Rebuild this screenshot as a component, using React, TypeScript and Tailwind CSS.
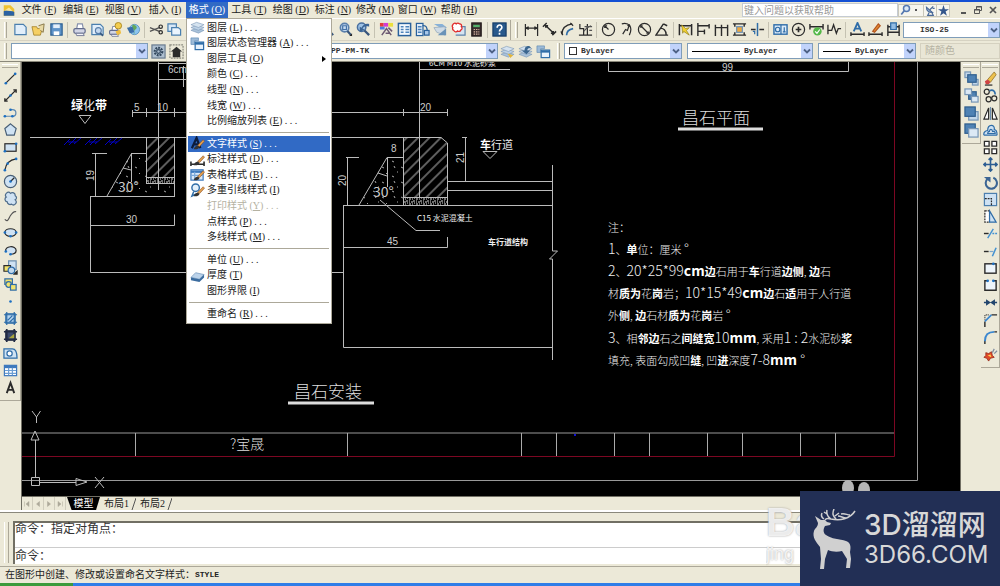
import type { ReactNode } from "react";

type Tool = { name: string; icon: ReactNode };

const INK = "#2b2b2b";
const BLUE = "#2f6da8";
const PALE = "#cfe2f3";

function Glyph({ children }: { children: ReactNode }) {
    return (
        <svg viewBox="0 0 16 16" className="w-[15px] h-[15px] shrink-0" fill="none" stroke={INK} strokeWidth="1.3">
            {children}
        </svg>
    );
}

const dot = (x: number, y: number) => <circle cx={x} cy={y} r="1.4" fill="#1b6fc2" stroke="none" />;
const brush = (
    <>
        <path d="M8 10l6-6 1.500 1.500-5.500 6z" fill="#e0a050" stroke="#8a4a20" strokeWidth=".6" />
        <path d="M4 14c1-3 3-4 5-3.500L10 12c-1 2-3 2.500-6 2z" fill="#333" stroke="none" />
    </>
);
const layers = (
    <>
        <path d="M1 11l6-2.500 8 2.500-6 3z" fill="#a9c2da" stroke="#7593b3" strokeWidth=".6" />
        <path d="M1 8l6-2.500L15 8l-6 3z" fill="#bcd1e6" stroke="#7593b3" strokeWidth=".6" />
        <path d="M1 5l6-2.500L15 5 9 8z" fill="#d5e3f0" stroke="#7593b3" strokeWidth=".6" />
    </>
);
const layerState = (
    <>
        <path d="M1 2h8v3H5v4H1z" fill="#9dbbd8" stroke="#5f89b3" strokeWidth=".7" />
        <rect x="5.500" y="6.500" width="9" height="8" fill="#e8f2fc" stroke={BLUE} />
        <path d="M5.500 8h9" stroke={BLUE} strokeWidth="2.400" />
    </>
);
const page = <path d="M2 2.500h9l3 3v8H2z" fill="#e1eefa" stroke="#4a7fae" />;
const printer = (
    <>
        <path d="M5 7l1-5h5l1 5" fill="#fff" stroke="#8791ad" />
        <rect x="2" y="7" width="12" height="5" rx="1.500" fill="#d3d6e6" stroke="#626b8c" />
        <path d="M4 12h8l1 2.500H5z" fill="#f3f3f8" stroke="#626b8c" strokeWidth=".9" />
    </>
);
const lens = (
    <>
        <circle cx="7" cy="6" r="4.500" fill="#c5daf0" stroke="#5a7fab" strokeWidth="1.700" />
        <path d="M10 9.500l4 4.500" stroke="#39567c" strokeWidth="2.400" />
    </>
);
const blob = (
    <path
        d="M3.500 6.500A3 3 0 0 1 8 2.500a3 3 0 0 1 5 2.500 2.500 2.500 0 0 1 0 4.500A3 3 0 0 1 9 14a3 3 0 0 1-4.500-2.500 2.700 2.700 0 0 1-1-5z"
        fill={PALE}
        stroke="#4f6d8c"
    />
);

const standardTools: Tool[][] = [
    [
        { name: "新建", icon: page },
        {
            name: "打开",
            icon: (
                <>
                    <path d="M1 5h5l1 2h5l-2 7H3z" fill="#f5cf63" stroke="#9c7a20" strokeWidth=".8" />
                    <path d="M8 4l6-2-1 9-3-2" fill="#e8d9a5" stroke="#7b6b3a" strokeWidth=".9" />
                </>
            ),
        },
        {
            name: "保存",
            icon: (
                <>
                    <rect x="2" y="2" width="12" height="12" fill="#5e93c8" stroke="#2c5f93" />
                    <path d="M4.500 2.500h7v4h-7z" fill="#e4effa" stroke="none" />
                    <path d="M5 10h6v4H5z" fill="#fff" stroke="none" />
                </>
            ),
        },
    ],
    [
        { name: "打印", icon: printer },
        { name: "打印预览", icon: <>{page}<g transform="translate(4 5) scale(.7)">{lens}</g></> },
        {
            name: "发布",
            icon: (
                <>
                    <g transform="translate(0 3) scale(.85)">{printer}</g>
                    <circle cx="11" cy="4" r="3.500" fill="#f4cd4d" stroke="#a4801c" strokeWidth=".9" />
                    <path d="M8 10l5-2 1 4-4 2z" fill="#f0bd3d" stroke="none" />
                </>
            ),
        },
        {
            name: "三维DWF",
            icon: (
                <>
                    <circle cx="9" cy="8" r="5.500" fill="#8cc5ee" stroke="#4d8abb" strokeWidth=".8" />
                    <path d="M7 3c4 0 6 3 3 5s1 4-2 5c3-4-3-6-1-10z" fill="#63a95b" stroke="none" />
                    <path d="M1 6l6-1 2 6-5 1z" fill="#3b6ea8" stroke="none" />
                </>
            ),
        },
    ],
    [
        {
            name: "剪切",
            icon: (
                <>
                    <path d="M1 6l10 4M1 10l10-4" stroke="#555" strokeWidth="1.400" />
                    <circle cx="12.500" cy="5" r="1.800" />
                    <circle cx="12.500" cy="11" r="1.800" />
                </>
            ),
        },
        {
            name: "复制",
            icon: (
                <>
                    <path d="M1 2h9v8H1z" fill="#d7e8f7" stroke="#4a7fae" />
                    <path d="M5 6h7l2.500 2v6H5z" fill="#eaf4fd" stroke="#4a7fae" />
                </>
            ),
        },
        { name: "粘贴", icon: <><path d="M2 3h9v11H2z" fill="#d9a54a" stroke="#7b5a1e" /><path d="M6 7h8v8H6z" fill="#fff" stroke="#4a7fae" /></> },
        { name: "特性匹配", icon: brush },
    ],
    [
        { name: "放弃", icon: <path d="M3 7c4-5 10-2 9 6M3 2v5h5" stroke={BLUE} strokeWidth="2" /> },
        { name: "重做", icon: <path d="M13 7C9 2 3 5 4 13M13 2v5H8" stroke={BLUE} strokeWidth="2" /> },
        { name: "平移", icon: <path d="M8 1v14M1 8h14" /> },
        { name: "实时缩放", icon: lens },
        { name: "三维动态观察", icon: <circle cx="8" cy="8" r="6" fill={PALE} /> },
        { name: "缩放", icon: lens },
        { name: "窗口缩放", icon: <>{lens}<path d="M15 12v3h-3z" fill={INK} stroke="none" /><path d="M5 4h4v4H5z" stroke="#4673a8" /></> },
        {
            name: "缩放上一个",
            icon: (
                <>
                    <circle cx="6" cy="5.500" r="4.500" fill="#9dc2e6" stroke="#496f9e" strokeWidth="1.600" />
                    <path d="M9 9l5 5" stroke="#39567c" strokeWidth="2.400" />
                    <path d="M14 2c-4-1-7 1-8 4l-2-1v6l5-3-2-1c1-2 4-3 7-2z" fill="#3c6594" stroke="none" />
                </>
            ),
        },
    ],
    [
        {
            name: "特性",
            icon: (
                <>
                    <path d="M1 1h4v4H1z" fill="#e23b3b" stroke="none" />
                    <path d="M5 1h5v4H5z" fill="#d23bd2" stroke="none" />
                    <path d="M10 1h5v4h-5z" fill="#ebdf3a" stroke="none" />
                    <path d="M1 5h5v3H1z" fill="#4a7de0" stroke="none" />
                    <path d="M3 14l5-7 5 7M10 6l4 4M7 12h5" stroke="#6d5a72" strokeWidth="1.600" />
                </>
            ),
        },
        {
            name: "设计中心",
            icon: (
                <>
                    <rect x="1.500" y="1.500" width="13" height="13" fill="#f3f8fd" stroke="#29619c" strokeWidth="1.600" />
                    <path d="M4 5h3M4 8h3M4 11h3M9 5h4M9 8h4M9 11h4" stroke="#4d83bb" strokeWidth="1.600" />
                </>
            ),
        },
        {
            name: "工具选项板",
            icon: (
                <>
                    <rect x="1.500" y="1.500" width="7" height="13" fill="#e4eef8" stroke="#29619c" />
                    <path d="M3 5h4M3 8h4M3 11h4" stroke="#4d83bb" strokeWidth="1.500" />
                    <path d="M8 4c4-1 5 2 5 6" stroke="#29619c" />
                    <rect x="10" y="9" width="5" height="5" fill="#a9c8e8" stroke="#29619c" />
                </>
            ),
        },
        {
            name: "图纸集",
            icon: (
                <>
                    <path d="M1 2h9l5 4-6 1z" fill="#87b1d8" stroke="none" />
                    <path d="M1 6l12-1v9L4 11z" fill="#cfdbe5" stroke="#93a8bb" strokeWidth=".8" />
                    <path d="M5 14l9-7v7z" fill="#6a93b8" stroke="none" />
                </>
            ),
        },
        {
            name: "标记集",
            icon: (
                <>
                    <path d="M8 5h7v9H5" fill="#d6e4f1" stroke="#5e83a9" />
                    <path
                        d="M2 3a2 2 0 0 1 3.500-1A2.200 2.200 0 0 1 9 2a2 2 0 0 1 2 3 2 2 0 0 1-.500 3.500 2.200 2.200 0 0 1-3.500 1 2.200 2.200 0 0 1-4-.500A2 2 0 0 1 2 6a2 2 0 0 1 0-3z"
                        fill="#fff"
                        stroke="#e02b2b"
                        strokeWidth="1.400"
                    />
                </>
            ),
        },
        {
            name: "计算器",
            icon: (
                <>
                    <rect x="3" y="1" width="10" height="14" fill="#3b2f2f" stroke="#221a1a" />
                    <path d="M4.500 3h7v2.500h-7z" fill="#54b06a" stroke="none" />
                    <path d="M5 8h6M5 10.500h6M5 13h6" stroke="#d9b7a4" strokeDasharray="1.500 1" />
                </>
            ),
        },
    ],
    [
        {
            name: "帮助",
            icon: (
                <>
                    <rect x="1" y="1" width="14" height="14" fill="#28598c" stroke="#173e68" />
                    <path d="M5.500 6c0-4 5.500-3.500 5 0-.3 2-2.500 2-2.500 4M8 11.500v2" stroke="#fff" strokeWidth="1.800" />
                </>
            ),
        },
    ],
];

const dimensionTools: Tool[][] = [
    [
        { name: "线性", icon: <path d="M1.500 2v13M14.500 2v13M2 6.500h12M5 5L2 6.500 5 8M11 5l3 1.500L11 8" /> },
        { name: "对齐", icon: <path d="M1 5l4-4M11 14l4-4M3.500 3.500l9 8.500M4 6V4h2.500M12 9.500V12H9.500" strokeWidth="1.600" /> },
        { name: "弧长", icon: <><path d="M2 13C2 7 6 3 13 2" /><path d="M7 14c0-4 2-6 7-7" stroke={BLUE} strokeWidth="1.800" /><path d="M1 10l2 4M11 1l3 3" /></> },
        { name: "坐标", icon: <><path d="M2 2v5h4v7M1 14h14M10 2v12" /><path d="M6 10l4-4 4-2M7 5h8M12 9h3" stroke="#555" /></> },
    ],
    [
        { name: "半径", icon: <><circle cx="8" cy="8" r="6.500" /><path d="M8 8L4 4M4 6.500V4h2.500" /></> },
        { name: "折弯", icon: <><path d="M3 2c8-2 12 4 8 12" /><path d="M4 13l3-5 2 1 2-6M9 4l2-1 1 2" /></> },
        { name: "直径", icon: <><circle cx="8" cy="8" r="6.500" /><path d="M3.500 3.500l9 9M4 6V4h2M12 10v2h-2" /></> },
        { name: "角度", icon: <path d="M14 14H1L9 2M5 7c4-1 7 2 7 7M9 2l4 2" strokeWidth="1.500" /> },
    ],
    [
        { name: "快速标注", icon: <><path d="M1.500 2v12M14.500 2v12M2 4h12" strokeWidth="1.600" /><path d="M4 3l4 4 4-1-3 3 3 5-6-4-1 2z" fill="#f3d130" stroke="#8b7a1c" strokeWidth=".7" /></> },
        { name: "基线", icon: <path d="M2 1v14M2 4h12M2 10h7M14 2v5M9 8v5" strokeWidth="1.500" /> },
        { name: "连续", icon: <path d="M1.500 3v12M8 3v12M14.500 3v12M2 6h12" strokeWidth="1.500" /> },
        { name: "标注间距", icon: <><path d="M1 2h14M1 14h14M3 2v3M3 14v-3M13 2v3M13 14v-3" strokeWidth="1.500" /><rect x="5" y="5" width="6" height="6" fill="#efa83c" stroke="#6c92b9" /></> },
        { name: "标注打断", icon: <><path d="M1 8h5M10 8h5" strokeWidth="1.500" /><path d="M8 1v14" stroke={BLUE} strokeWidth="1.600" /><path d="M3 10h2v3" stroke={BLUE} /></> },
    ],
    [
        { name: "公差", icon: <><rect x="1" y="3" width="14" height="10" fill="#dcebf8" stroke={BLUE} strokeWidth="1.500" /><circle cx="5" cy="8" r="2.400" stroke={BLUE} /><path d="M8.500 3v10M12 5.500v5M10.500 10.500h3" stroke={BLUE} /></> },
        { name: "圆心标记", icon: <><circle cx="8" cy="8" r="6.500" /><path d="M8 5v6M5 8h6" strokeWidth="1.800" /></> },
        { name: "检验", icon: <><path d="M1 2v6M15 2v6M1 5h14" strokeWidth="1.500" /><circle cx="9" cy="10" r="4.500" fill="#54b848" stroke="none" /><path d="M6.500 10l2 2 3-4" stroke="#fff" /></> },
        { name: "折弯线性", icon: <path d="M1 3v10M1 9h4l2-6 3 9 2-5h3" strokeWidth="1.400" /> },
    ],
    [
        { name: "编辑标注", icon: <><path d="M1 11v4M15 11v4M1 13h14" strokeWidth="1.500" /><path d="M4 10l4-9 4 9M5.500 7h5" stroke={BLUE} strokeWidth="2" /></> },
        { name: "编辑标注文字", icon: <><path d="M1 11v4M15 11v4M1 13h14" strokeWidth="1.500" /><path d="M5 10l6-8 2 2-6 7z" fill="#e58f31" stroke="#b3541e" /></> },
        { name: "标注更新", icon: <><path d="M2 3v12M14 3v12M2 5h12M2 11h12" strokeWidth="1.500" /><path d="M5 1h6v7H5z" fill="#92bce3" stroke={BLUE} /></> },
    ],
];

const layerTools: Tool[] = [
    { name: "图层上置", icon: <>{layers}<path d="M8 10l6 2-3 3z" fill="#e4b638" stroke="none" /></> },
    { name: "上一个图层", icon: <>{layers}<path d="M12 2c-4 0-5 2-5 5H4l5 4 4-4h-3c0-2 1-3 4-3z" fill="#3b668f" stroke="none" /></> },
    { name: "图层状态", icon: layerState },
];

const drawTools: Tool[] = [
    { name: "直线", icon: <><path d="M3 13L13 3" />{dot(3, 13)}{dot(13, 3)}</> },
    { name: "构造线", icon: <><path d="M2 14L14 2M2 11v3h3M11 2h3v3" strokeWidth="1.500" />{dot(8, 8)}</> },
    { name: "多段线", icon: <><path d="M2 12h8c5 0 5-7 0-7H8" stroke="#5c87b0" />{dot(2, 12)}{dot(8, 5)}{dot(10, 12)}</> },
    { name: "正多边形", icon: <path d="M8 2l6 5-2 7H4L2 7z" fill={PALE} stroke="#485f77" /> },
    { name: "矩形", icon: <><rect x="2" y="4" width="12" height="8" fill={PALE} />{dot(2, 12)}{dot(14, 4)}</> },
    { name: "圆弧", icon: <><path d="M2 14C3 7 7 3 14 2" />{dot(2, 14)}{dot(5, 7)}{dot(14, 2)}</> },
    { name: "圆", icon: <><circle cx="8" cy="8" r="6.500" fill={PALE} stroke="#485f77" /><path d="M8 8l4-4" />{dot(8, 8)}</> },
    { name: "修订云线", icon: blob },
    { name: "样条曲线", icon: <path d="M2 12c3 4 4-1 6-4s4-5 6-4" stroke="#555" /> },
    { name: "椭圆", icon: <><ellipse cx="8" cy="8" rx="6" ry="4" fill={PALE} />{dot(2, 8)}{dot(14, 8)}{dot(8, 12)}</> },
    { name: "椭圆弧", icon: <><path d="M3 9C1 3 14 2 14 8c0 3-3 4-6 4" fill={PALE} />{dot(3, 9)}{dot(8, 12)}</> },
    { name: "插入块", icon: <><path d="M6 1h8v9H6z" fill={PALE} stroke="#6d8fb0" /><path d="M1 6h7v6H1z" fill="#f2e36c" /><circle cx="9" cy="11" r="3.500" fill="#c1d8ed" stroke={BLUE} /><path d="M15 12v3h-3z" fill={INK} /></> },
    { name: "创建块", icon: <><path d="M2 2h8v6H2z" fill="#f2e36c" stroke={BLUE} /><circle cx="6" cy="8" r="3" fill="#f2e36c" stroke={BLUE} /><rect x="8" y="8" width="6" height="6" fill="#f2e36c" stroke={BLUE} /></> },
    { name: "点", icon: dot(8, 8) },
    { name: "图案填充", icon: <><rect x="3" y="3" width="10" height="10" fill="#b8d6f0" stroke={BLUE} /><path d="M1 4h14M1 12h14M4 1v14M12 1v14M5 10l5-5M7 12l5-5" stroke={BLUE} /></> },
    { name: "渐变色", icon: <><rect x="3" y="3" width="10" height="10" fill="#3c4a6c" stroke="#222b44" /><path d="M1 4h14M1 12h14M4 1v14M12 1v14" stroke="#222b44" strokeWidth="1.800" /><path d="M6 11l6-5v5z" fill="#a9a43c" stroke="none" /></> },
    { name: "面域", icon: <><path d="M1 3h9c3 0 5 3 5 10H1z" fill={PALE} stroke={BLUE} /><circle cx="7" cy="8" r="2.800" fill="#fff" stroke={BLUE} /></> },
    { name: "表格", icon: <><rect x="1.500" y="2.500" width="13" height="11" fill="#fff" stroke="#3d79bd" /><path d="M2 4h12" stroke="#3d79bd" strokeWidth="3" /><path d="M2 8h12M2 11h12M6 5v8M10 5v8" stroke="#6d9fd4" /></> },
    { name: "多行文字", icon: <path d="M4 14L8 3l4 11M5 10.500h6" strokeWidth="2" /> },
];

const orderTools: Tool[] = [
    { name: "前置", icon: <><rect x="1" y="1" width="6" height="6" fill="#c3d7ea" stroke="#7796b6" /><rect x="9" y="9" width="6" height="6" fill="#c3d7ea" stroke="#7796b6" /><rect x="4" y="4" width="9" height="8" fill="#4f82b4" stroke="#315f8e" /></> },
    { name: "后置", icon: <><rect x="5" y="4" width="8" height="8" fill="#4f82b4" stroke="#315f8e" /><rect x="1" y="1" width="7" height="6" fill="#dce9f5" stroke="#7796b6" /><rect x="8" y="9" width="7" height="6" fill="#dce9f5" stroke="#7796b6" /></> },
    { name: "置于对象之上", icon: <><rect x="5" y="6" width="10" height="9" fill="#c3d7ea" stroke="#7796b6" /><rect x="1" y="1" width="11" height="10" fill="#4f82b4" stroke="#315f8e" /></> },
    { name: "置于对象之下", icon: <><rect x="1" y="1" width="11" height="10" fill="#4f82b4" stroke="#315f8e" /><rect x="5" y="6" width="10" height="9" fill="#dce9f5" stroke="#7796b6" /></> },
];

const modifyTools: Tool[] = [
    { name: "删除", icon: <><path d="M5 9l7-8 2 3-6 8z" fill="#edc14d" stroke="#8e6d21" strokeWidth=".8" /><path d="M2 11l3-2 3 3-2 2H3z" fill="#cf4343" stroke="none" /><path d="M2 15h8" /></> },
    { name: "复制对象", icon: <><circle cx="4" cy="4" r="2.700" /><circle cx="6" cy="12" r="2.700" /><circle cx="12" cy="11" r="2.700" /><path d="M7 3c4-2 6 1 6 4" stroke={BLUE} strokeWidth="1.800" /></> },
    { name: "镜像", icon: <><path d="M6 2v12H1zM10 2v12h5z" fill="#fff" /><path d="M8 1v14" stroke="#6b8bab" /></> },
    { name: "偏移", icon: <><path d="M1 13h14M1 13c-1-4 3-5 4-5 0-7 8-7 7-1 3 0 3 3 3 6" stroke={BLUE} fill={PALE} /><path d="M5 11h8c0-3-2-2-3-2 0-3-3-3-3 0-1 0-2 0-2 2z" fill="#fff" stroke={BLUE} /></> },
    { name: "阵列", icon: <path d="M1.500 1.500h5v5h-5zM9.500 1.500h5v5h-5zM1.500 9.500h5v5h-5zM9.500 9.500h5v5h-5z" fill="#fff" strokeWidth="1.400" /> },
    { name: "移动", icon: <path d="M8 1v14M1 8h14M6 3l2-2 2 2M6 13l2 2 2-2M3 6L1 8l2 2M13 6l2 2-2 2" stroke="#2d5d92" strokeWidth="1.700" /> },
    { name: "旋转", icon: <><path d="M5 4a6 6 0 1 0 6-1" stroke="#3c6594" strokeWidth="2.200" /><path d="M1 2h7v6z" fill="#3c6594" stroke="none" /></> },
    { name: "缩放对象", icon: <><rect x="1.500" y="1.500" width="13" height="13" fill={PALE} stroke="#4c7fae" /><path d="M2 7h7v7" stroke={INK} strokeDasharray="2 1" /></> },
    { name: "拉伸", icon: <><path d="M2 2h5v12H2z" fill="#fff" strokeDasharray="2 1" /><path d="M7 2l7 12H7z" fill={PALE} stroke={BLUE} /></> },
    { name: "修剪", icon: <><path d="M1 8h5" strokeWidth="1.500" /><path d="M5 13l6-10" stroke="#4391d1" strokeWidth="1.500" /><path d="M10 8h5" stroke="#4391d1" strokeWidth="1.500" strokeDasharray="2 1" /></> },
    { name: "延伸", icon: <><path d="M1 8h5" strokeWidth="1.500" /><path d="M7 8h4" stroke="#7da6cc" /><path d="M10 13l4-9" stroke="#4391d1" strokeWidth="1.600" /></> },
    { name: "打断于点", icon: <><rect x="2" y="3" width="12" height="10" fill="#eef5fb" strokeWidth="1.500" />{dot(11, 3)}</> },
    { name: "打断", icon: <><path d="M5 3H2v10h12V3h-3" fill="#eef5fb" strokeWidth="1.500" />{dot(5, 3)}{dot(11, 3)}</> },
    { name: "合并", icon: <path d="M1 8h4M15 8h-4M4 6l3 2-3 2zM12 6L9 8l3 2z" fill="#23466e" stroke="#23466e" strokeWidth="1.500" /> },
    { name: "倒角", icon: <><path d="M2 15V9M9 2h6" strokeWidth="1.500" /><path d="M2 9l7-7" stroke="#3b87cf" strokeWidth="1.800" /><path d="M2 7V2h5" strokeDasharray="1 1" /></> },
    { name: "圆角", icon: <><path d="M2 15v-4M12 2h3" strokeWidth="1.500" /><path d="M2 12C2 6 5 2 12 2" stroke="#3b87cf" strokeWidth="2" /></> },
    { name: "分解", icon: <><path d="M3 6l3 1 3-2 1 4 2 2-4 1-2 3-2-3-3-1 2-2z" fill="#e04a2a" stroke="#8f2313" strokeWidth=".8" /><path d="M5 9l3-1 1 3z" fill="#ffd94f" stroke="none" /><path d="M10 6l2-4M12 7l3-3" stroke="#7f8ca0" /></> },
];

const menus = [
    ["文件", "F"],
    ["编辑", "E"],
    ["视图", "V"],
    ["插入", "I"],
    ["格式", "O"],
    ["工具", "T"],
    ["绘图", "D"],
    ["标注", "N"],
    ["修改", "M"],
    ["窗口", "W"],
    ["帮助", "H"],
];

type Entry = { text: string; mnemonic: string; more?: boolean; icon?: ReactNode; disabled?: boolean; active?: boolean; sub?: boolean };

const formatMenu: { height: string; entries: Entry[] }[] = [
    {
        height: "h-[109px]",
        entries: [
            { text: "图层", mnemonic: "L", more: true, icon: layers },
            { text: "图层状态管理器", mnemonic: "A", more: true, icon: layerState },
            { text: "图层工具", mnemonic: "O", sub: true },
            { text: "颜色", mnemonic: "C", more: true },
            { text: "线型", mnemonic: "N", more: true },
            { text: "线宽", mnemonic: "W", more: true },
            { text: "比例缩放列表", mnemonic: "E", more: true },
        ],
    },
    {
        height: "h-[109px]",
        entries: [
            { text: "文字样式", mnemonic: "S", more: true, active: true, icon: <><path d="M2 13L7 2l4 11M4 9h6" stroke="#0c1c3c" strokeWidth="2.400" />{brush}</> },
            { text: "标注样式", mnemonic: "D", more: true, icon: <><path d="M1 10v5M15 10v5M1 13h14" strokeWidth="1.700" />{brush}</> },
            { text: "表格样式", mnemonic: "B", more: true, icon: <><rect x="1" y="3" width="13" height="11" fill="#dbe9f7" stroke="#3d79bd" /><path d="M1 5h13" stroke="#3d79bd" strokeWidth="2.500" /><path d="M1 9h13M5 5v9" stroke="#7ba9da" />{brush}</> },
            { text: "多重引线样式", mnemonic: "I", icon: <><circle cx="6" cy="5" r="4" fill="#e3f0fb" stroke={BLUE} strokeWidth="1.500" /><path d="M4 9l-2 5 4-2" stroke={BLUE} strokeWidth="1.500" />{brush}</> },
            { text: "打印样式", mnemonic: "Y", more: true, disabled: true },
            { text: "点样式", mnemonic: "P", more: true },
            { text: "多线样式", mnemonic: "M", more: true },
        ],
    },
    {
        height: "h-[47px]",
        entries: [
            { text: "单位", mnemonic: "U", more: true },
            { text: "厚度", mnemonic: "T", icon: <><path d="M1 10l5-5 9 2-5 5z" fill="#bcd3ea" stroke="#6a8fb5" strokeWidth=".7" /><path d="M1 10l9 2v3l-9-2zM10 12l5-5v3l-5 5z" fill="#3b6c9f" stroke="none" /></> },
            { text: "图形界限", mnemonic: "I" },
        ],
    },
    { height: "h-4", entries: [{ text: "重命名", mnemonic: "R", more: true }] },
];

function ToolButton({ tool }: { tool: Tool }) {
    return (
        <button type="button" aria-label={tool.name} className="flex w-[18px] h-[17px] shrink-0 items-center justify-center">
            <Glyph>{tool.icon}</Glyph>
        </button>
    );
}

function Grip() {
    return <span className="mx-1 h-4 w-[3px] shrink-0 border-x border-l-white border-r-[#aca899]" />;
}

function ToolGroups({ groups }: { groups: Tool[][] }) {
    return (
        <>
            {groups.map((group, i) => (
                <div key={i} className="flex items-center">
                    {i > 0 && <span className={`h-4 w-px bg-[#c5c2b2] ${group.length > 6 ? "mx-1" : "mx-0.5"}`} />}
                    {group.map((tool) => (
                        <ToolButton key={tool.name} tool={tool} />
                    ))}
                </div>
            ))}
        </>
    );
}

function ToolColumn({ tools, height }: { tools: Tool[]; height: string }) {
    return (
        <div className="flex flex-col items-center border-r border-b border-[#aca899] pb-1">
            <span className="my-[2px] h-[4px] w-4 border-y border-t-white border-b-[#aca899]" />
            <div className={`flex flex-col justify-between ${height}`}>
                {tools.map((tool) => (
                    <ToolButton key={tool.name} tool={tool} />
                ))}
            </div>
        </div>
    );
}

function Combo({ label, value, width, lead, pad = "pl-1" }: { label: string; value: string; width: string; lead?: ReactNode; pad?: string }) {
    return (
        <div className={`flex h-4 items-center border border-[#7f9db9] bg-white ${width}`}>
            {lead}
            <select
                aria-label={label}
                className={`h-full min-w-0 flex-1 appearance-none bg-transparent font-['Liberation_Mono','Noto_Sans_CJK_SC',monospace] text-[8px] font-bold text-[#333] ${pad}`}
            >
                <option>{value}</option>
            </select>
            <span className="flex h-[14px] w-[11px] items-center justify-center bg-[#c1d3fb]">
                <svg viewBox="0 0 8 8" className="h-2 w-2" fill="none" stroke="#4d6185" strokeWidth="1.800">
                    <path d="M1 2.500l3 3 3-3" />
                </svg>
            </span>
        </div>
    );
}

function FormatMenu() {
    return (
        <div className="absolute top-full left-0 z-20 w-[146px] border border-[#aca899] bg-white p-px text-[10px] text-[#222]">
            {formatMenu.map((group, i) => (
                <div key={i}>
                    {i > 0 && <div className="mx-px my-[3px] h-px bg-[#aca899]" />}
                    <div className={`grid auto-rows-fr ${group.height}`}>
                        {group.entries.map((e) => (
                            <button
                                key={e.text}
                                type="button"
                                disabled={e.disabled}
                                className={`flex items-center text-left whitespace-nowrap ${
                                    e.active ? "bg-[#316ac5] text-white" : e.disabled ? "text-[#b5b2a2]" : ""
                                }`}
                            >
                                <span className="flex w-[19px] justify-center">{e.icon && <Glyph>{e.icon}</Glyph>}</span>
                                <span className="leading-3">
                                    {e.text} (<u>{e.mnemonic}</u>){e.more && " . . ."}
                                </span>
                                {e.sub && (
                                    <svg viewBox="0 0 4 6" className="mr-1 ml-auto h-[6px] w-1">
                                        <path d="M0 0l4 3-4 3z" />
                                    </svg>
                                )}
                            </button>
                        ))}
                    </div>
                </div>
            ))}
        </div>
    );
}

function MenuBar() {
    return (
        <div className="flex h-4 items-center bg-[#ece9d8] text-[10px] text-[#222]">
            <svg viewBox="0 0 16 16" className="mx-[3px] h-[13px] w-3">
                <path d="M1 1h9l5 5v9H1z" fill="#f1c232" />
                <path d="M1 9l6-3 8 4v5H1z" fill="#2b62a3" />
                <path d="M2 8l6-4 5 5z" fill="#fbe59a" />
            </svg>
            {menus.map(([text, key]) => (
                <div key={text} className="relative h-full">
                    <button
                        type="button"
                        className={`h-full w-[42px] leading-4 whitespace-nowrap ${text === "格式" ? "bg-[#316ac5] text-white" : ""}`}
                    >
                        {text} (<u>{key}</u>)
                    </button>
                    {text === "格式" && <FormatMenu />}
                </div>
            ))}
            <div className="ml-auto flex h-full items-center">
                <input
                    aria-label="帮助搜索"
                    placeholder="键入问题以获取帮助"
                    className="h-[14px] w-[156px] border border-[#c5cbd3] bg-white px-px text-[10px] placeholder:text-[#999]"
                />
                <div className="mr-[5px] flex h-[13px] items-center border border-[#c9c7ba] bg-[#f6f5ee]">
                    <button type="button" aria-label="搜索" className="flex w-6 items-center gap-1">
                        <svg viewBox="0 0 16 16" className="h-3 w-3" fill="none">
                            <circle cx="10" cy="6" r="4" fill="#dbe9f7" stroke="#5578b0" strokeWidth="2" />
                            <path d="M7 9l-4 5" stroke="#5578b0" strokeWidth="2.400" />
                        </svg>
                        <span className="h-[2px] w-[2px] bg-[#555]" />
                    </button>
                    <button type="button" aria-label="通讯中心" className="flex w-[13px] justify-center border-l border-[#c9c7ba]">
                        <svg viewBox="0 0 16 16" className="h-[11px] w-[11px]" fill="none" stroke="#4a6a99">
                            <path d="M2 3c0 6 4 8 9 8z" fill="#9db4d3" strokeWidth="1.500" />
                            <path d="M7 7l5-5M6 11l-2 4h8l-2-4M11 5h3" strokeWidth="1.800" />
                        </svg>
                    </button>
                    <button type="button" aria-label="收藏夹" className="flex w-[13px] justify-center border-l border-[#c9c7ba]">
                        <svg viewBox="0 0 16 16" className="h-[11px] w-[11px]" fill="#33568c">
                            <path d="M8 0l2 6h6l-5 3.500 2 6-5-3.500-5 3.500 2-6L0 6h6z" />
                        </svg>
                    </button>
                </div>
                <button type="button" aria-label="最小化" className="flex w-[15px] justify-center">
                    <svg viewBox="0 0 10 10" className="h-[10px] w-[10px]" stroke="#555" strokeWidth="2">
                        <path d="M3 8h5" />
                    </svg>
                </button>
                <button type="button" aria-label="还原" className="flex w-[15px] justify-center">
                    <svg viewBox="0 0 10 10" className="h-[10px] w-[10px]" fill="none" stroke="#555">
                        <path d="M3.500 4V1.500h5v4H7M1.500 4.500h5v4h-5zM3 2h6M1 5h6" />
                    </svg>
                </button>
                <button type="button" aria-label="关闭" className="flex w-[15px] justify-center">
                    <svg viewBox="0 0 10 10" className="h-[10px] w-[10px]" stroke="#555" strokeWidth="1.700">
                        <path d="M2 2l6 6M8 2L2 8" />
                    </svg>
                </button>
            </div>
        </div>
    );
}

function Toolbars() {
    return (
        <>
            <div className="flex h-[22px] items-center border-t border-white bg-[#ece9d8]">
                <Grip />
                <ToolGroups groups={standardTools} />
                <span className="ml-0.5 h-5 w-px shrink-0 bg-[#aca899]" />
                <Grip />
                <ToolGroups groups={dimensionTools} />
                <span className="w-px shrink-0" />
                <Combo label="标注样式" value="ISO-25" width="min-w-0 flex-1" pad="pl-4" />
            </div>
            <div className="flex h-[21px] items-center border-t border-[#d6d2c2] bg-[#ece9d8]">
                <Grip />
                <Combo label="工作空间" value="" width="w-[137px] shrink-0" />
                <span className="flex w-[38px] shrink-0 justify-center">
                    <ToolButton
                        tool={{
                            name: "工作空间设置",
                            icon: (
                                <>
                                    <rect x="1" y="1" width="14" height="14" fill="#aebfd0" stroke="#6b7d90" />
                                    <circle cx="8" cy="8" r="4" stroke="#33485e" strokeWidth="2.400" strokeDasharray="2 1" />
                                    <circle cx="8" cy="8" r="2" stroke="#33485e" />
                                </>
                            ),
                        }}
                    />
                    <ToolButton
                        tool={{
                            name: "我的工作空间",
                            icon: (
                                <>
                                    <rect x="1" y="1" width="14" height="14" stroke="#8b8b80" strokeDasharray="2 1" />
                                    <path d="M2 8l6-5 6 5h-2v6H4V8z" fill="#2b2b2b" stroke="none" />
                                </>
                            ),
                        }}
                    />
                </span>
                <Combo label="图层" value="PP-PM-TK" width="w-[312px] shrink-0" pad="pl-36" />
                <span className="flex shrink-0">
                    {layerTools.map((tool) => (
                        <ToolButton key={tool.name} tool={tool} />
                    ))}
                </span>
                <span className="w-px shrink-0" />
                <Grip />
                <Combo
                    label="颜色"
                    value="ByLayer"
                    width="w-[118px] shrink-0"
                    lead={<span className="ml-1 h-2 w-2 shrink-0 border border-[#333] bg-white" />}
                />
                <span className="w-[5px] shrink-0" />
                <Combo
                    label="线型"
                    value="ByLayer"
                    width="w-[126px] shrink-0"
                    lead={<span className="ml-1 h-px w-12 shrink-0 bg-black" />}
                />
                <span className="w-[5px] shrink-0" />
                <Combo
                    label="线宽"
                    value="ByLayer"
                    width="w-[98px] shrink-0"
                    lead={<span className="ml-1 h-px w-7 shrink-0 bg-black" />}
                />
                <select
                    aria-label="打印样式"
                    disabled
                    className="ml-1 h-4 min-w-0 flex-1 appearance-none border border-[#d5d1c0] bg-[#e9e6d6] pl-1 text-[10px] leading-3 text-[#b5b2a2]"
                >
                    <option>随颜色</option>
                </select>
            </div>
        </>
    );
}

const B = ({ children }: { children: ReactNode }) => (
    <tspan fontWeight="700" fill="#fff">
        {children}
    </tspan>
);
const N = ({ children }: { children: ReactNode }) => <tspan fontSize="14">{children}</tspan>;

function Drawing() {
    const titleMarks = [135, 347, 521, 556, 614, 649, 707, 742, 800, 835];
    return (
        <svg className="block h-[434px] w-full bg-black font-['Noto_Sans_CJK_SC',sans-serif]" role="img" aria-label="模型空间">
            <defs>
                <pattern id="hatch" width="8" height="8" patternUnits="userSpaceOnUse" patternTransform="rotate(45)">
                    <path d="M1 0v8" stroke="#bbb" />
                </pattern>
                <pattern id="mortar" width="7" height="5" patternUnits="userSpaceOnUse">
                    <path d="M0 1h2M3 0h1M5 2h2M1 3h1M3 4h2M6 4h1M3 2h1" stroke="#ddd" />
                </pattern>
                <pattern id="concrete" width="19" height="15" patternUnits="userSpaceOnUse">
                    <path d="M2 2l2 1M14 1l1 2M6 9l1-1M12 11l2 1M17 7h1" stroke="#aaa" />
                </pattern>
            </defs>
            <g transform="translate(-22 -62)">
                {/* sheet frame and title block */}
                <g fill="none" stroke="#999" strokeWidth="1">
                    <path d="M917.500 62V480.500H22" />
                    <path d="M22 433H894" />
                    <path d={titleMarks.map((x) => `M${x}.500 433v24`).join("")} stroke="#aaa" />
                    <path d="M894.500 62V456.500H22" stroke="#7c0722" />
                </g>
                <path d="M574 435h2" stroke="#1010d0" strokeWidth="2" />

                {/* left kerb */}
                <path d="M131 153L107 196H146V153Z" fill="url(#concrete)" />
                <rect x="146" y="183" width="29" height="13" fill="url(#concrete)" />
                <rect x="146" y="137" width="29" height="40" fill="url(#hatch)" />
                <rect x="146" y="177" width="29" height="6" fill="url(#mortar)" />
                <g fill="none" stroke="#bbb" strokeWidth="1">
                    <path d="M30 137.500H186M132 112.500H186M132.500 110v7M146.500 108v9M174.500 108v9" />
                    <path d="M158.500 62V190M158 63.500H186M158 79.500H186M183.500 66v21" />
                    <path d="M146.500 137V183M174.500 137V196M146 177.500h29M146 183.500h29" />
                    <path d="M146 153.500H131.500L107 196M131.500 153v29M123 168l8 2" />
                    <path d="M95.500 153v43M92 153.500h15M90 196.500h85M90.500 196V272.500H186M90 225.500h84.500v-11" />
                    <path d="M79 115.500h12l-6 8z" />
                </g>
                <path
                    d="M64 145l6-6M69 145l7-7M74 144l7-6M85 145l6-6M90 145l7-7M95 144l7-6M105 145l6-6M110 145l7-7M115 144l7-6M68 142h8M89 142h8M109 142h8"
                    stroke="#0000c8"
                />

                {/* right kerb */}
                <path d="M387 157L359 205H403V157Z" fill="url(#concrete)" />
                <path d="M403 137H441L447 143V197H403Z" fill="url(#hatch)" />
                <rect x="403" y="197" width="44" height="8" fill="url(#mortar)" />
                <g fill="none" stroke="#bbb" strokeWidth="1">
                    <path d="M332 137.500H441L447.500 143V205M403.500 137V205M403 197.500h44" />
                    <path d="M332 112.500H447M403.500 109v7M447.500 109v7M419.500 62V197M419 69.500h91" />
                    <path d="M403 157.500H387L359 205M387.500 157v30M378 173l9 3" />
                    <path d="M347.500 157v48M346 157.500h13M343 205.500H552M447 181.500H552M447 190.500H552" />
                    <path d="M343.500 205V347.500H552M343 247.500H447.500V237M332 272.500h11" />
                    <path d="M552.500 165v86h5l-8 8h3v101M465.500 137v44M462 137.500h5" />
                    <path d="M483 151.500h14l-7 7z" />
                    <path d="M380 200l36 30.500h24" />
                    <path d="M608.500 62v9.500H848.500V62" />
                </g>
                <path d="M678 129h85M288 403h86" stroke="#ddd" strokeWidth="3" />

                {/* dimension figures */}
                <g fill="#ccc" fontSize="10" fontFamily="Liberation Sans, sans-serif">
                    <text x="168" y="73">6cm</text>
                    <text x="134" y="111">5</text>
                    <text x="157" y="111">10</text>
                    <text x="126" y="223">30</text>
                    <text x="420" y="111">20</text>
                    <text x="391" y="152">8</text>
                    <text x="387" y="245">45</text>
                    <text x="722" y="71">99</text>
                    <text transform="translate(94 181) rotate(-90)">19</text>
                    <text transform="translate(346 186) rotate(-90)">20</text>
                    <text transform="translate(464 163) rotate(-90)">21</text>
                </g>
                <g fill="#ccc" fontSize="14">
                    <text x="118" y="192">30°</text>
                    <text x="373" y="197">30°</text>
                </g>

                {/* labels */}
                <g fill="#eee" fontSize="12">
                    <text x="71" y="110">
                        <B>绿</B>化<B>带</B>
                    </text>
                    <text x="480" y="149" fontSize="11">
                        <B>车</B>行道
                    </text>
                    <text x="417" y="221" fontSize="8">C15 水泥混凝土</text>
                    <text x="488" y="245" fontSize="8" fontWeight="700">车行道结构</text>
                    <text x="429" y="66" fontSize="8">6CM M10 水泥砂浆</text>
                </g>
                <g fill="#ddd" fontSize="17" fontWeight="300">
                    <text x="682" y="124">昌石平面</text>
                    <text x="294" y="398">昌石安装</text>
                    <text x="230" y="449" fontSize="14">?宝晟</text>
                </g>

                {/* construction notes */}
                <g fill="#eee" fontSize="11" fontWeight="300">
                    <text x="608" y="232">注：</text>
                    <text x="608" y="254"><N>1</N>、<B>单</B>位：厘米 <N>°</N></text>
                    <text x="608" y="276"><N>2</N>、<N>20*25*99<B>cm</B></N><B>边</B>石用于<B>车</B>行道<B>边侧</B>, <B>边</B>石</text>
                    <text x="608" y="298">材<B>质为</B>花<B>岗</B>岩；<N>10*15*49<B>cm</B></N><B>边</B>石<B>适</B>用于人行道</text>
                    <text x="608" y="320">外<B>侧</B>, <B>边</B>石材<B>质为</B>花<B>岗</B>岩 <N>°</N></text>
                    <text x="608" y="343"><N>3</N>、相<B>邻边</B>石之<B>间缝宽</B><N>10<B>mm</B></N>, 采用<N>1 : 2</N>水泥砂<B>浆</B></text>
                    <text x="608" y="365">填充, 表面勾成凹<B>缝</B>, 凹<B>进</B>深度<N>7-8<B>mm</B> °</N></text>
                </g>

                {/* UCS icon */}
                <g fill="none" stroke="#bbb" strokeWidth="1">
                    <path d="M35 431l-4 9h8zM35.500 440v37M31.500 477.500h8v8h-8zM39 482.500h37M76 478.500l11 3.500-11 3.500z" />
                    <path d="M32 411l4.500 6 4-6M36.500 417v6M95 477l9 11M104 477l-9 11" />
                </g>
                <g fill="#b5b5b5">
                    <ellipse cx="848" cy="488" rx="6" ry="8" />
                    <ellipse cx="864" cy="490" rx="6" ry="8" />
                </g>
            </g>
        </svg>
    );
}

function LayoutTabs() {
    return (
        <div className="flex h-[14px] items-center border-t border-[#716f64] bg-[#ece9d8] text-[10px] leading-3 text-[#222]">
            {["M3 3v10M12 3L6 8l6 5z", "M11 3L5 8l6 5z", "M5 3l6 5-6 5z", "M13 3v10M4 3l6 5-6 5z"].map((d, i) => (
                <button
                    key={d}
                    type="button"
                    aria-label={["第一个", "上一个", "下一个", "最后一个"][i]}
                    className="flex h-full w-[11px] items-center justify-center border-r border-[#d0cdbd]"
                >
                    <svg viewBox="0 0 16 16" className="h-2 w-2" fill="#aca899" stroke="#aca899">
                        <path d={d} />
                    </svg>
                </button>
            ))}
            <button type="button" className="ml-[1px] h-full w-[33px] bg-black text-white [clip-path:polygon(0_0,100%_0,88%_100%,14%_100%)]">
                模型
            </button>
            {["布局1", "布局2"].map((name) => (
                <button key={name} type="button" className="flex h-full w-9 items-center justify-between pl-1">
                    {name}
                    <svg viewBox="0 0 5 12" className="h-3 w-[5px] shrink-0" stroke="#555">
                        <path d="M5 0L1 12" />
                    </svg>
                </button>
            ))}
        </div>
    );
}

function CommandWindow() {
    return (
        <div className="bg-[#ece9d8]">
            <div className="h-[3px] border-b border-[#8a887b] bg-white" />
            <div className="flex pt-2">
                <span className="mx-1 my-px w-[5px] border-x border-l-white border-r-[#aca899]" />
                <div className="flex-1 border-t-2 border-l-2 border-[#716f64] bg-white text-[12px] text-[#333]">
                    <p className="h-6 leading-3">命令：指定对角点：</p>
                    <label className="flex h-[17px] items-center border-t border-[#ccc]">
                        命令：
                        <input aria-label="命令" className="min-w-0 flex-1 outline-none" />
                    </label>
                </div>
            </div>
        </div>
    );
}

function Watermark() {
    return (
        <div className="absolute right-0 bottom-0 flex items-end">
            <div className="mb-5 w-[34px] overflow-hidden font-['Liberation_Sans',sans-serif] text-white/80 [text-shadow:0_0_2px_#999]">
                <p className="text-[40px] leading-10 font-bold">Ba</p>
                <p className="text-lg leading-6">jing</p>
            </div>
            <div className="flex h-[95px] w-[200px] items-center gap-[6px] bg-[#222f55] pl-3 text-[#d8d8d8]">
                <svg viewBox="0 0 46 60" className="h-[60px] w-[46px] shrink-0" fill="#d0d0d0">
                    <path d="M3 7l6 4 4 0 2 2 4 1-1 2-5 1c-2 3-2 7 1 9 5 4 14 4 20 6 5 2 5 6 4 11l1 7-1 9h-4l1-9-5-8c-4 1-10 1-14-1l-3 9-1 10H8l1-10-1-12C4 33 0 28 2 22c1-3 4-4 4-8z" />
                    <g fill="none" stroke="#d0d0d0" strokeWidth="1.500">
                        <path d="M13 11c1-2 3-2 6-1 9 2 19 0 24-8M19 10c-3-2-5-4-4-9M24 10c-3-3-4-5-2-10M15 5l-3-2M27 4l-4 3M34 9c-3 0-5-2-8-2M38 6c-3 0-5-2-9-1" />
                        <path d="M12 10c-3-2-3-4-2-6" />
                    </g>
                </svg>
                <div className="whitespace-nowrap">
                    <p className="font-['Inter','Noto_Sans_CJK_SC',sans-serif] text-[28px] leading-8 font-medium">3D溜溜网</p>
                    <p className="font-['Inter',sans-serif] text-[24px] leading-7">3D66.COM</p>
                </div>
            </div>
        </div>
    );
}

export default function App() {
    return (
        <div className="relative flex min-h-screen flex-col overflow-hidden bg-[#ece9d8] font-['Liberation_Serif','Noto_Sans_CJK_SC',serif]">
            <div className="h-[2px] bg-[#1450d4]" />
            <MenuBar />
            <Toolbars />
            <div className="flex border-t border-[#8a887b]">
                <aside className="w-[21px] shrink-0">
                    <ToolColumn tools={drawTools} height="h-[326px]" />
                </aside>
                <main className="min-w-0 flex-1 border-l border-[#716f64]">
                    <Drawing />
                    <LayoutTabs />
                </main>
                <aside className="flex shrink-0 items-start border-l border-[#716f64] pl-px">
                    <ToolColumn tools={orderTools} height="h-[69px]" />
                    <ToolColumn tools={modifyTools} height="h-[293px]" />
                </aside>
            </div>
            <CommandWindow />
            <footer className="mt-[2px] flex flex-1 items-center border-t border-[#aca899] pl-[5px] text-[10px] leading-3 text-[#222]">
                在图形中创建、修改或设置命名文字样式：
                <span className="font-['Liberation_Mono',monospace] text-[8px] font-bold">STYLE</span>
            </footer>
            <div className="flex h-[3px] bg-[#2f7de8]">
                <span className="w-[73px] bg-[#3c9a3c]" />
            </div>
            <Watermark />
        </div>
    );
}
